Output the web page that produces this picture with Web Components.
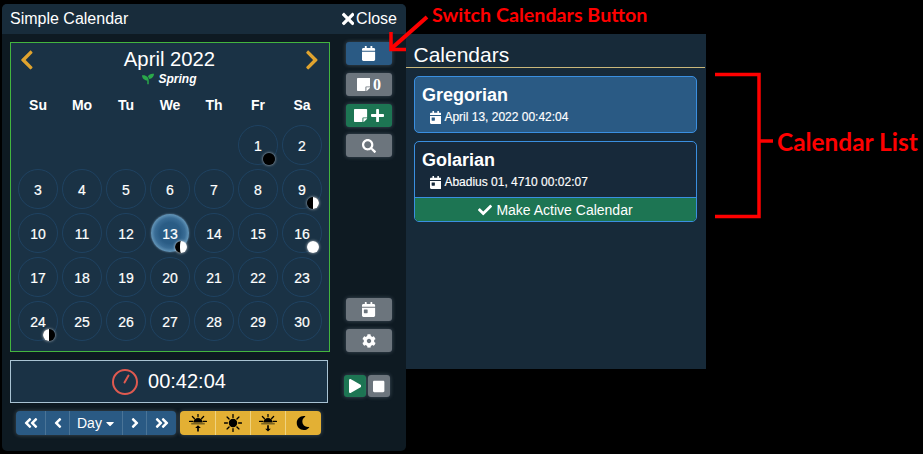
<!DOCTYPE html>
<html>
<head>
<meta charset="utf-8">
<title>Simple Calendar</title>
<style>
html, body { margin: 0; background: #000; height: 100%; overflow: hidden; }
</style>
</head>
<body>
<sc-app></sc-app>
<script>
const ICONS = {
  calendar: [448, 'M12 192h424c6.6 0 12 5.4 12 12v260c0 26.5-21.5 48-48 48H48c-26.5 0-48-21.5-48-48V204c0-6.6 5.4-12 12-12zm436-44v-36c0-26.5-21.5-48-48-48h-48V12c0-6.6-5.4-12-12-12h-40c-6.6 0-12 5.4-12 12v52H160V12c0-6.6-5.4-12-12-12h-40c-6.6 0-12 5.4-12 12v52H48C21.5 64 0 85.5 0 112v36c0 6.6 5.4 12 12 12h424c6.6 0 12-5.4 12-12z'],
  calendarDay: [448, 'M0 464c0 26.5 21.5 48 48 48h352c26.5 0 48-21.5 48-48V192H0v272zm64-192c0-8.8 7.2-16 16-16h96c8.8 0 16 7.2 16 16v96c0 8.8-7.2 16-16 16H80c-8.8 0-16-7.2-16-16v-96zM400 64h-48V16c0-8.8-7.2-16-16-16h-32c-8.8 0-16 7.2-16 16v48H160V16c0-8.8-7.2-16-16-16h-32c-8.8 0-16 7.2-16 16v48H48C21.5 64 0 85.5 0 112v48h448v-48c0-26.5-21.5-48-48-48z'],
  times: [352, 'M242.72 256l100.07-100.07c12.28-12.28 12.28-32.19 0-44.48l-22.24-22.24c-12.28-12.28-32.19-12.28-44.48 0L176 189.28 75.93 89.21c-12.28-12.28-32.19-12.28-44.48 0L9.21 111.45c-12.28 12.28-12.28 32.19 0 44.48L109.28 256 9.21 356.07c-12.28 12.28-12.28 32.19 0 44.48l22.24 22.24c12.28 12.28 32.2 12.28 44.48 0L176 322.72l100.07 100.07c12.28 12.28 32.2 12.28 44.48 0l22.24-22.24c12.28-12.28 12.28-32.19 0-44.48L242.72 256z'],
  check: [512, 'M173.898 439.404l-166.4-166.4c-9.997-9.997-9.997-26.206 0-36.204l36.203-36.204c9.997-9.998 26.207-9.998 36.204 0L192 312.69 432.095 72.596c9.997-9.997 26.207-9.997 36.204 0l36.203 36.204c9.997 9.997 9.997 26.206 0 36.204l-294.4 294.401c-9.998 9.997-26.207 9.997-36.204-.001z'],
  search: [512, 'M505 442.7L405.3 343c-4.5-4.5-10.6-7-17-7H372c27.6-35.3 44-79.7 44-128C416 93.1 322.9 0 208 0S0 93.1 0 208s93.1 208 208 208c48.3 0 92.7-16.4 128-44v16.3c0 6.4 2.5 12.5 7 17l99.7 99.7c9.4 9.4 24.6 9.4 33.9 0l28.3-28.3c9.4-9.4 9.4-24.6.1-34zM208 336c-70.7 0-128-57.2-128-128 0-70.7 57.2-128 128-128 70.7 0 128 57.2 128 128 0 70.7-57.2 128-128 128z'],
  cog: [512, 'M487.4 315.7l-42.6-24.6c4.3-23.2 4.3-47 0-70.2l42.6-24.6c4.9-2.8 7.1-8.6 5.5-14-11.1-35.6-30-67.8-54.7-94.6-3.8-4.1-10-5.1-14.8-2.3L380.8 110c-17.9-15.4-38.5-27.3-60.8-35.1V25.8c0-5.6-3.9-10.5-9.4-11.7-36.7-8.2-74.3-7.8-109.2 0-5.5 1.2-9.4 6.1-9.4 11.7V75c-22.2 7.9-42.8 19.8-60.8 35.1L88.7 85.5c-4.9-2.8-11-1.9-14.8 2.3-24.7 26.7-43.6 58.9-54.7 94.6-1.7 5.4.6 11.2 5.5 14L67.3 221c-4.3 23.2-4.3 47 0 70.2l-42.6 24.6c-4.9 2.8-7.1 8.6-5.5 14 11.1 35.6 30 67.8 54.7 94.6 3.8 4.1 10 5.1 14.8 2.3l42.6-24.6c17.9 15.4 38.5 27.3 60.8 35.1v49.2c0 5.6 3.9 10.5 9.4 11.7 36.7 8.2 74.3 7.8 109.2 0 5.5-1.2 9.4-6.1 9.4-11.7v-49.2c22.2-7.9 42.8-19.8 60.8-35.1l42.6 24.6c4.9 2.8 11 1.9 14.8-2.3 24.7-26.7 43.6-58.9 54.7-94.6 1.5-5.5-.7-11.3-5.6-14.1zM256 336c-44.1 0-80-35.9-80-80s35.9-80 80-80 80 35.9 80 80-35.9 80-80 80z'],
  play: [448, 'M424.4 214.7L72.4 6.6C43.8-10.3 0 6.1 0 47.9V464c0 37.5 40.7 60.1 72.4 41.3l352-208c31.4-18.5 31.5-64.1 0-82.6z'],
  stop: [448, 'M400 32H48C21.5 32 0 53.5 0 80v352c0 26.5 21.5 48 48 48h352c26.5 0 48-21.5 48-48V80c0-26.5-21.5-48-48-48z'],
  note: [448, 'M312 320h136V56c0-13.3-10.7-24-24-24H24C10.7 32 0 42.7 0 56v400c0 13.3 10.7 24 24 24h264V344c0-13.2 10.8-24 24-24zm129 55l-98 98c-4.5 4.5-10.6 7-17 7h-6V352h128v6.1c0 6.3-2.5 12.4-7 16.9z'],
  plus: [448, 'M416 208H272V64c0-17.67-14.33-32-32-32h-32c-17.67 0-32 14.33-32 32v144H32c-17.67 0-32 14.33-32 32v32c0 17.67 14.33 32 32 32h144v144c0 17.67 14.33 32 32 32h32c17.67 0 32-14.33 32-32V304h144c17.67 0 32-14.33 32-32v-32c0-17.67-14.33-32-32-32z'],
  chevronLeft: [320, 'M34.52 239.03L228.87 44.69c9.37-9.37 24.57-9.37 33.94 0l22.67 22.67c9.36 9.36 9.37 24.52.04 33.9L131.49 256l154.02 154.75c9.34 9.38 9.32 24.54-.04 33.9l-22.67 22.67c-9.37 9.37-24.57 9.37-33.94 0L34.52 272.97c-9.37-9.37-9.37-24.57 0-33.94z'],
  chevronRight: [320, 'M285.476 272.971L91.132 467.314c-9.373 9.373-24.569 9.373-33.941 0l-22.667-22.667c-9.357-9.357-9.375-24.522-.04-33.901L188.505 256 34.484 101.255c-9.335-9.379-9.317-24.544.04-33.901l22.667-22.667c9.373-9.373 24.569-9.373 33.941 0L285.475 239.03c9.373 9.372 9.373 24.568.001 33.941z'],
  seedling: [512, 'M64 96H0c0 123.7 100.3 224 224 224v144c0 8.8 7.2 16 16 16h32c8.8 0 16-7.2 16-16V320C288 196.3 187.7 96 64 96zm384-64c-84.2 0-157.4 46.5-195.7 115.2 27.7 30.2 48.2 66.9 59 107.6C424 243.1 512 147.9 512 32h-64z'],
  angleLeft: [256, 'M31.7 239l136-136c9.4-9.4 24.6-9.4 33.9 0l22.6 22.6c9.4 9.4 9.4 24.6 0 33.9L127.9 256l96.4 96.4c9.4 9.4 9.4 24.6 0 33.9L201.7 409c-9.4 9.4-24.6 9.4-33.9 0l-136-136c-9.5-9.4-9.5-24.6-.1-34z'],
  angleRight: [256, 'M224.3 273l-136 136c-9.4 9.4-24.6 9.4-33.9 0l-22.6-22.6c-9.4-9.4-9.4-24.6 0-33.9l96.4-96.4-96.4-96.4c-9.4-9.4-9.4-24.6 0-33.9L54.3 103c9.4-9.4 24.6-9.4 33.9 0l136 136c9.5 9.4 9.5 24.6.1 34z'],
  angleDoubleLeft: [448, 'M223.7 239l136-136c9.4-9.4 24.6-9.4 33.9 0l22.6 22.6c9.4 9.4 9.4 24.6 0 33.9L319.9 256l96.4 96.4c9.4 9.4 9.4 24.6 0 33.9L393.7 409c-9.4 9.4-24.6 9.4-33.9 0l-136-136c-9.5-9.4-9.5-24.6-.1-34zM31.7 273l136 136c9.4 9.4 24.6 9.4 33.9 0l22.6-22.6c9.4-9.4 9.4-24.6 0-33.9L127.9 256l96.4-96.4c9.4-9.4 9.4-24.6 0-33.9L201.7 103c-9.4-9.4-24.6-9.4-33.9 0l-136 136c-9.5 9.4-9.5 24.6-.1 34z'],
  angleDoubleRight: [448, 'M224.3 273l-136 136c-9.4 9.4-24.6 9.4-33.9 0l-22.6-22.6c-9.4-9.4-9.4-24.6 0-33.9l96.4-96.4-96.4-96.4c-9.4-9.4-9.4-24.6 0-33.9L54.3 103c9.4-9.4 24.6-9.4 33.9 0l136 136c9.5 9.4 9.5 24.6.1 34zM416.3 239l-136-136c-9.4-9.4-24.6-9.4-33.9 0l-22.6 22.6c-9.4 9.4-9.4 24.6 0 33.9l96.4 96.4-96.4 96.4c-9.4 9.4-9.4 24.6 0 33.9l22.6 22.6c9.4 9.4 24.6 9.4 33.9 0l136-136c9.5-9.4 9.5-24.6.1-34z'],
  caretDown: [320, 'M31.3 192h257.3c17.8 0 26.7 21.5 14.1 34.1L174.1 354.8c-7.8 7.8-20.5 7.8-28.3 0L17.2 226.1C4.6 213.5 13.5 192 31.3 192z'],
  moon: [512, 'M283.211 512c78.962 0 151.079-35.925 198.857-94.792 7.068-8.708-.639-21.43-11.562-19.35-124.203 23.654-238.262-71.576-238.262-196.954 0-72.222 38.662-138.635 101.498-174.394 9.686-5.512 7.25-20.197-3.756-22.23A258.156 258.156 0 0 0 283.211 0c-141.309 0-256 114.511-256 256 0 141.309 114.511 256 256 256z']
};

const iconSvg = (name, size, color) => {
  const [w, d] = ICONS[name];
  return `<svg width="${size * w / 512}" height="${size}" viewBox="0 0 ${w} 512" fill="${color || 'currentColor'}" style="display:block;flex:none"><path d="${d}"/></svg>`;
};

// rays + half sun, shared by sunrise and sunset
const sunHalf = `
  <path d="M1 13h6M25 13h6M6 4.500l3.500 3.500M26 4.500l-3.500 3.500M16 0v5" stroke="#000" stroke-width="2.200" stroke-linecap="round"/>
  <path d="M8 15a8 8 0 0 1 16 0z" fill="#000"/>
  <path d="M4 17h24" stroke="#7a6220" stroke-width="3"/>`;
const TIME_ICONS = {
  sunrise: `${sunHalf}<path d="M16 31v-9" stroke="#000" stroke-width="3"/><path d="M11 25l5-5 5 5z" fill="#000"/>`,
  midday: `<circle cx="16" cy="16" r="7.500" fill="#000"/><path d="M16 1v5M16 26v5M1 16h5M26 16h5M5.500 5.500l3.500 3.500M26.500 5.500l-3.500 3.500M5.500 26.500l3.500-3.500M26.500 26.500l-3.500-3.500" stroke="#000" stroke-width="2.400" stroke-linecap="round"/>`,
  sunset: `${sunHalf}<path d="M16 20v7" stroke="#000" stroke-width="3"/><path d="M11 26l5 5 5-5z" fill="#000"/>`
};

class ScIcon extends HTMLElement {
  connectedCallback() {
    this.attachShadow({ mode: 'open' }).innerHTML = `
      <style>:host { display: inline-flex; align-items: center; justify-content: center; flex: none; }</style>
      ${iconSvg(this.getAttribute('name'), +this.getAttribute('size') || 14, this.getAttribute('color'))}`;
  }
}

class ScMoon extends HTMLElement {
  connectedCallback() {
    const phase = this.getAttribute('phase');
    const fills = {
      new: '<circle cx="6" cy="6" r="6" fill="#000"/>',
      full: '<circle cx="6" cy="6" r="6" fill="#fff"/>',
      first: '<circle cx="6" cy="6" r="6" fill="#000"/><path d="M6 0a6 6 0 0 1 0 12z" fill="#fff"/>',
      last: '<circle cx="6" cy="6" r="6" fill="#000"/><path d="M6 0a6 6 0 0 0 0 12z" fill="#fff"/>',
      gibbous: '<circle cx="6" cy="6" r="6" fill="#fff"/><path d="M6 0a6 6 0 0 0 0 12a1 6 0 0 1 0-12z" fill="#000"/>'
    };
    this.attachShadow({ mode: 'open' }).innerHTML = `
      <style>
        :host { display: block; width: 12px; height: 12px; border-radius: 50%; box-shadow: 0 0 3px rgba(255,255,255,.75); }
        svg { display: block; }
      </style>
      <svg width="12" height="12" viewBox="0 0 12 12">${fills[phase]}</svg>`;
  }
}

const dayTemplate = document.createElement('template');
dayTemplate.innerHTML = `
  <style>
    :host { display: block; position: relative; width: 40px; height: 40px; box-sizing: border-box; border: 1px solid #1f4261; border-radius: 50%;
      font-size: 14px; font-weight: 500; color: #fff; }
    :host([current]) { border: 0; margin: 1px; width: 38px; height: 38px;
      background: radial-gradient(circle closest-side, #2a5c85 0 55%, #3a6d96 80%, #6597ba 100%); box-shadow: 0 0 2px rgba(150,190,225,.7); }
    .n { display: flex; align-items: center; justify-content: center; height: 100%; padding-top: 1px; box-sizing: border-box; -webkit-text-stroke: .2px #fff; }
    ::slotted(sc-moon) { position: absolute; right: 2px; bottom: -1px; }
  </style>
  <div class="n"></div><slot></slot>`;

class ScDay extends HTMLElement {
  connectedCallback() {
    const root = this.attachShadow({ mode: 'open' });
    root.appendChild(dayTemplate.content.cloneNode(true));
    root.querySelector('.n').textContent = this.getAttribute('n');
  }
}

class ScMonth extends HTMLElement {
  connectedCallback() {
    const moons = { 1: 'new', 9: 'first', 13: 'gibbous', 16: 'full', 24: 'last' };
    let cells = '';
    for (let i = 0; i < 5; i++) cells += '<span></span>';
    for (let d = 1; d <= 30; d++) {
      const moon = moons[d] ? `<sc-moon phase="${moons[d]}"></sc-moon>` : '';
      cells += `<sc-day n="${d}"${d === 13 ? ' current' : ''}>${moon}</sc-day>`;
    }
    const weekdays = ['Su', 'Mo', 'Tu', 'We', 'Th', 'Fr', 'Sa'].map(w => `<b>${w}</b>`).join('');
    this.attachShadow({ mode: 'open' }).innerHTML = `
      <style>
        :host { display: block; box-sizing: border-box; width: 320px; height: 310px; border: 1px solid #43b53f; background: #1a3245; color: #fff; padding: 0 7px; }
        .title { display: flex; align-items: center; justify-content: space-between; height: 34px; padding: 0 3px 0 2px; font-size: 20.300px; }
        .title span { position: relative; top: -1px; }
        .season { display: flex; justify-content: center; align-items: center; gap: 5px; height: 14px; margin-top: -5px; padding-right: 2px; font-size: 12px; font-weight: 700; font-style: italic; }
        .week, .grid { display: grid; grid-template-columns: repeat(7, 40px); column-gap: 4px; }
        .week { height: 20px; margin-top: 9px; margin-bottom: 10px; align-items: center; justify-items: center; font-size: 14px; }
        .grid { row-gap: 4px; }
      </style>
      <div class="title">
        <sc-icon name="chevronLeft" size="22" color="#dfa32e"></sc-icon>
        <span>April 2022</span>
        <sc-icon name="chevronRight" size="22" color="#dfa32e"></sc-icon>
      </div>
      <div class="season"><sc-icon name="seedling" size="12" color="#2aa84a"></sc-icon>Spring</div>
      <div class="week">${weekdays}</div>
      <div class="grid">${cells}</div>`;
  }
}

class ScClock extends HTMLElement {
  connectedCallback() {
    this.attachShadow({ mode: 'open' }).innerHTML = `
      <style>
        :host { display: flex; align-items: center; justify-content: center; gap: 10px; box-sizing: border-box; width: 318px; height: 43px;
          border: 1px solid #a9c3d3; background: #1a3245; color: #fff; font-size: 20px; }
        svg { display: block; }
      </style>
      <svg width="26" height="26" viewBox="0 0 26 26" fill="none" stroke="#df5a50" stroke-width="2">
        <circle cx="13" cy="13" r="12"/><path d="M12.500 13.500l4-7" stroke-linecap="round"/>
      </svg>
      <span><slot></slot></span>`;
  }
}

const buttonTemplate = document.createElement('template');
buttonTemplate.innerHTML = `
  <style>
    :host { display: flex; align-items: center; justify-content: center; gap: 3px; box-sizing: border-box; width: 46px; height: 23px; border-radius: 3px;
      background: var(--btn, #6c757d); color: #fff; box-shadow: 0 0 4px rgba(190,210,225,.3); font-size: 14px; font-weight: 700; }
    :host([tone="blue"]) { --btn: #2a5a84; }
    :host([tone="green"]) { --btn: #1d7553; }
  </style>
  <slot></slot>`;

class ScButton extends HTMLElement {
  connectedCallback() {
    this.attachShadow({ mode: 'open' }).appendChild(buttonTemplate.content.cloneNode(true));
  }
}

const groupTemplate = document.createElement('template');
groupTemplate.innerHTML = `
  <style>
    :host { display: flex; height: 24px; border-radius: 4px; overflow: hidden; background: var(--bg); box-shadow: 0 0 4px rgba(190,210,225,.3); }
    ::slotted(*) { display: flex; align-items: center; justify-content: center; box-sizing: border-box; height: 100%; color: var(--fg); border-left: 1px solid var(--sep); }
    ::slotted(:first-child) { border-left: 0; }
  </style>
  <slot></slot>`;

class ScGroup extends HTMLElement {
  connectedCallback() {
    this.attachShadow({ mode: 'open' }).appendChild(groupTemplate.content.cloneNode(true));
  }
}

class ScSunIcon extends HTMLElement {
  connectedCallback() {
    const name = this.getAttribute('name');
    const inner = name === 'moon' ? iconSvg('moon', 14, '#000') : `<svg width="18" height="18" viewBox="0 0 32 32" style="display:block">${TIME_ICONS[name]}</svg>`;
    this.attachShadow({ mode: 'open' }).innerHTML = `
      <style>:host { display: flex; width: 35px; align-items: center; justify-content: center; }</style>${inner}`;
  }
}

class ScTimeControls extends HTMLElement {
  connectedCallback() {
    this.attachShadow({ mode: 'open' }).innerHTML = `
      <style>
        :host { display: flex; gap: 4px; padding-left: 6px; font-size: 14px; }
        .blue { --bg: #2a5a84; --fg: #fff; --sep: #4a7497; width: 160px; }
        .gold { --bg: #e3b034; --fg: #000; --sep: #efd27f; width: 141px; }
        .s { width: 24px; } .w { width: 29px; } .w2 { width: 30px; }
        .day { width: 53px; gap: 4px; padding-right: 1px; }
      </style>
      <sc-group class="blue">
        <span class="w"><sc-icon name="angleDoubleLeft" size="16"></sc-icon></span>
        <span class="s"><sc-icon name="angleLeft" size="16"></sc-icon></span>
        <span class="day">Day<sc-icon name="caretDown" size="13"></sc-icon></span>
        <span class="s"><sc-icon name="angleRight" size="16"></sc-icon></span>
        <span class="w2"><sc-icon name="angleDoubleRight" size="16"></sc-icon></span>
      </sc-group>
      <sc-group class="gold">
        <sc-sun-icon name="sunrise"></sc-sun-icon>
        <sc-sun-icon name="midday"></sc-sun-icon>
        <sc-sun-icon name="sunset"></sc-sun-icon>
        <sc-sun-icon name="moon"></sc-sun-icon>
      </sc-group>`;
  }
}

class ScCalCard extends HTMLElement {
  connectedCallback() {
    this.attachShadow({ mode: 'open' }).innerHTML = `
      <style>
        :host { display: block; box-sizing: border-box; width: 283px; border: 1px solid #3a8fe0; border-radius: 5px; overflow: hidden; color: #fff; background: #17293a; }
        :host([active]) { background: #2a5a84; }
        .name { font-size: 18px; font-weight: 700; line-height: 20px; padding: 8px 8px 0 7px; }
        .date { display: flex; align-items: center; gap: 3px; font-size: 12px; font-weight: 500; line-height: 14px; padding: 5px 15px 8px; -webkit-text-stroke: .15px #fff; }
        .action { display: flex; align-items: center; justify-content: center; gap: 4px; height: 23px; background: #1d7553; border-top: 1px solid #3a8fe0; font-size: 14px; }
      </style>
      <div class="name">${this.getAttribute('name')}</div>
      <div class="date"><sc-icon name="calendarDay" size="13"></sc-icon><span>${this.getAttribute('date')}</span></div>
      ${this.hasAttribute('action') ? `<div class="action"><sc-icon name="check" size="14"></sc-icon>${this.getAttribute('action')}</div>` : ''}`;
  }
}

class ScDrawer extends HTMLElement {
  connectedCallback() {
    this.attachShadow({ mode: 'open' }).innerHTML = `
      <style>
        :host { display: block; box-sizing: border-box; width: 300px; height: 335px; background: #172a39; color: #fff; }
        h2 { margin: 0 0 8px; height: 34px; box-sizing: border-box; padding: 9px 8px 0 7.500px; font-size: 21px; font-weight: 400; line-height: 24px; border-bottom: 1px solid #c9b77a; width: 299px; }
        .list { display: flex; flex-direction: column; gap: 8px; padding-left: 8px; }
      </style>
      <h2>Calendars</h2>
      <div class="list"><slot></slot></div>`;
  }
}

class ScWindow extends HTMLElement {
  connectedCallback() {
    this.attachShadow({ mode: 'open' }).innerHTML = `
      <style>
        :host { display: block; box-sizing: border-box; width: 404px; height: 447px; border-radius: 5px; overflow: hidden; background: #0e1a22; color: #fff; flex: none; }
        header { display: flex; align-items: center; justify-content: space-between; height: 30px; padding: 0 9px 0 8px; background: #182c3b; font-size: 16px; }
        header div { display: flex; align-items: center; gap: 2px; }
        .body { display: grid; grid-template-columns: 336px 68px; padding-top: 8px; }
        .left { display: flex; flex-direction: column; padding-left: 8px; }
        .left sc-clock { margin-top: 8px; }
        .left sc-time-controls { margin-top: 8px; }
        .side { display: flex; flex-direction: column; align-items: flex-start; padding-left: 8px; gap: 8px; }
        .find { margin-top: -1px; }
        .spacer { height: 125px; }
        .run { display: flex; gap: 2px; margin: 15px 0 0 -2px; }
        .run sc-button { width: 22px; height: 22px; }
        .count { font-family: "Liberation Serif", serif; font-size: 16px; }
      </style>
      <header>
        <span>Simple Calendar</span>
        <div><sc-icon name="times" size="18"></sc-icon>Close</div>
      </header>
      <div class="body">
        <div class="left">
          <sc-month></sc-month>
          <sc-clock>00:42:04</sc-clock>
          <sc-time-controls></sc-time-controls>
        </div>
        <div class="side">
          <sc-button tone="blue"><sc-icon name="calendar" size="15"></sc-icon></sc-button>
          <sc-button><sc-icon name="note" size="15"></sc-icon><span class="count">0</span></sc-button>
          <sc-button tone="green"><sc-icon name="note" size="15"></sc-icon><sc-icon name="plus" size="15"></sc-icon></sc-button>
          <sc-button class="find"><sc-icon name="search" size="14"></sc-icon></sc-button>
          <div class="spacer"></div>
          <sc-button><sc-icon name="calendarDay" size="15"></sc-icon></sc-button>
          <sc-button><sc-icon name="cog" size="14"></sc-icon></sc-button>
          <div class="run">
            <sc-button tone="green"><sc-icon name="play" size="14"></sc-icon></sc-button>
            <sc-button><sc-icon name="stop" size="13"></sc-icon></sc-button>
          </div>
        </div>
      </div>`;
  }
}

// red notes drawn on top of the screenshot
class ScNotes extends HTMLElement {
  connectedCallback() {
    this.attachShadow({ mode: 'open' }).innerHTML = `
      <style>
        :host { position: absolute; inset: 0; pointer-events: none; }
        span { position: absolute; color: #f00; font-family: Lato, "Open Sans", sans-serif; font-weight: 700; white-space: nowrap; }
        .a { left: 432px; top: 3px; font-size: 19.700px; line-height: 24px; }
        .b { left: 777px; top: 128px; font-size: 24.400px; line-height: 28px; }
        svg { position: absolute; left: 0; top: 0; }
      </style>
      <svg width="923" height="454" fill="none" stroke="#f00" stroke-width="3.500">
        <path d="M427 17L392 48" stroke-width="4"/>
        <path d="M391 32V49.500H406" stroke-width="3.500"/>
        <path d="M715 74.500H759V216.500H715M759 141H773"/>
      </svg>
      <span class="a">Switch Calendars Button</span>
      <span class="b">Calendar List</span>`;
  }
}

class ScApp extends HTMLElement {
  connectedCallback() {
    this.attachShadow({ mode: 'open' }).innerHTML = `
      <style>
        :host { display: flex; align-items: flex-start; padding: 4px 0 0 2px; font-family: "Liberation Sans", Arial, sans-serif; position: relative; height: 454px; box-sizing: border-box; }
        sc-drawer { margin-top: 30px; }
      </style>
      <sc-window></sc-window>
      <sc-drawer>
        <sc-cal-card active name="Gregorian" date="April 13, 2022 00:42:04"></sc-cal-card>
        <sc-cal-card name="Golarian" date="Abadius 01, 4710 00:02:07" action="Make Active Calendar"></sc-cal-card>
      </sc-drawer>
      <sc-notes></sc-notes>`;
  }
}

// children first so nested elements are ready when the app renders
customElements.define('sc-icon', ScIcon);
customElements.define('sc-moon', ScMoon);
customElements.define('sc-day', ScDay);
customElements.define('sc-month', ScMonth);
customElements.define('sc-clock', ScClock);
customElements.define('sc-button', ScButton);
customElements.define('sc-group', ScGroup);
customElements.define('sc-sun-icon', ScSunIcon);
customElements.define('sc-time-controls', ScTimeControls);
customElements.define('sc-cal-card', ScCalCard);
customElements.define('sc-drawer', ScDrawer);
customElements.define('sc-window', ScWindow);
customElements.define('sc-notes', ScNotes);
customElements.define('sc-app', ScApp);
</script>
</body>
</html>
